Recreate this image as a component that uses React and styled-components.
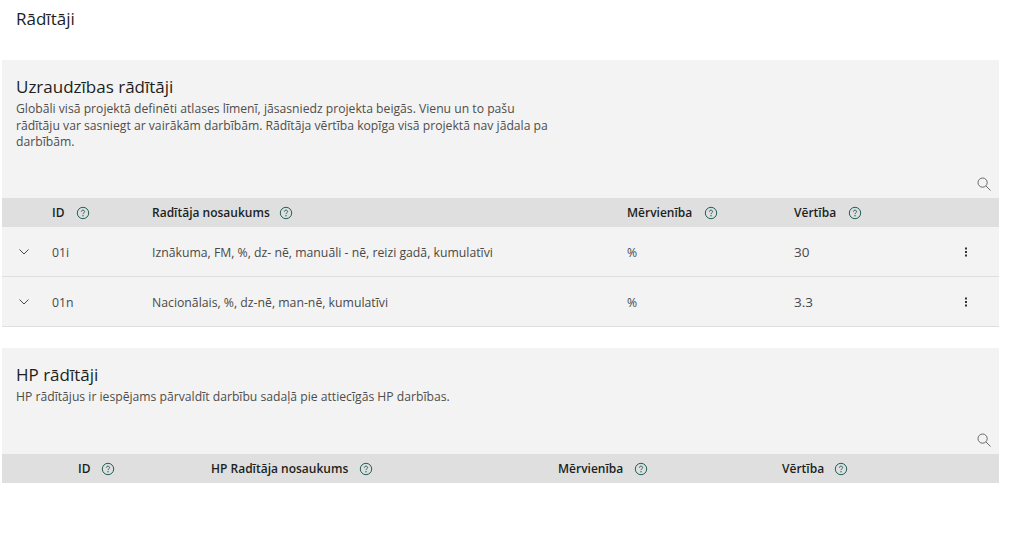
import React from 'react'
import styled, { createGlobalStyle } from 'styled-components'

const Global = createGlobalStyle`
  html, body { margin: 0; padding: 0; background: #fff; }
  body { font-family: "Open Sans", "Noto Sans", sans-serif; color: #252423; }
`

const Page = styled.div`
  width: 1009px;
  height: 551px;
  box-sizing: border-box;
  padding: 0 10px 0 2px;
  overflow: hidden;
`
const PageTitle = styled.h1`
  margin: 0;
  padding: 8px 0 0 14px;
  height: 60px;
  box-sizing: border-box;
  font-size: 17px;
  line-height: 22px;
  font-weight: 400;
  color: #201f1e;
`
const Panel = styled.section`
  background: #f3f3f3;
  margin-bottom: ${p => p.$gap || 0}px;
`
const PanelHead = styled.div`
  height: ${p => p.$height}px;
  box-sizing: border-box;
  padding: 15px 0 0 14px;
  position: relative;
`
const Title = styled.h2`
  margin: 0 0 2px;
  font-size: 17px;
  line-height: 24px;
  font-weight: 400;
  color: #201f1e;
`
const Desc = styled.p`
  margin: 0;
  width: 540px;
  font-size: 12.18px;
  line-height: 16.5px;
  color: #4f4d4b;
`
const SearchBtn = styled.span`
  position: absolute;
  right: 8px;
  bottom: 7px;
  display: flex;
  color: #6b6a69;
`
const HeadRow = styled.div`
  display: grid;
  grid-template-columns: ${p => p.$cols};
  align-items: center;
  height: 29px;
  background: #dfdfdf;
`
const HeadCell = styled.div`
  display: flex;
  align-items: center;
  gap: ${p => p.$gap || 10}px;
  font-size: 12px;
  font-weight: 600;
  color: #201f1e;
`
const Row = styled.div`
  display: grid;
  grid-template-columns: ${p => p.$cols};
  align-items: center;
  height: 50px;
  box-sizing: border-box;
  padding-top: 1px;
  border-bottom: 1px solid #dfdfdf;
  font-size: 12.25px;
  color: #4a4948;
`
const Toggle = styled.span`
  display: flex;
  justify-content: center;
  padding-right: 6px;
  color: #4a4948;
`
const Value = styled.span`
  font-size: 13.5px;
`
const More = styled.span`
  display: flex;
  justify-content: center;
  color: #333;
`

const Help = () => (
  <svg width="14" height="14" viewBox="0 0 14 14" fill="none">
    <circle cx="7" cy="7" r="5.7" stroke="#1f6159" strokeWidth="1" />
    <path d="M5.4 5.7c0-1 .7-1.5 1.6-1.5s1.6.5 1.6 1.4c0 1.2-1.6 1.3-1.6 2.5" stroke="#1f6159" strokeWidth="1" />
    <circle cx="7" cy="9.8" r=".7" fill="#1f6159" />
  </svg>
)
const Search = () => (
  <svg width="14" height="14" viewBox="0 0 14 14" fill="none" stroke="currentColor" strokeWidth="1">
    <circle cx="5.6" cy="5.6" r="4.6" />
    <path d="M9 9l4.5 4.5" />
  </svg>
)
const Chevron = () => (
  <svg width="12" height="12" viewBox="0 0 12 12" fill="none" stroke="currentColor" strokeWidth="1">
    <path d="M1.500 3.500l4.500 4.500L10.500 3.500" />
  </svg>
)
const Dots = () => (
  <svg width="4" height="12" viewBox="0 0 4 12" fill="currentColor">
    <rect x="1" y="1.500" width="2" height="2" />
    <rect x="1" y="5" width="2" height="2" />
    <rect x="1" y="8.500" width="2" height="2" />
  </svg>
)

const mainCols = '50px 100px 475px 167px 152px 40px'
const hpCols = '76px 133px 347px 224px 1fr'

const rows = [
  { id: '01i', name: 'Iznākuma, FM, %, dz- nē, manuāli - nē, reizi gadā, kumulatīvi', unit: '%', value: '30' },
  { id: '01n', name: 'Nacionālais, %, dz-nē, man-nē, kumulatīvi', unit: '%', value: '3.3' },
]

export default function App() {
  return (
    <Page>
      <Global />
      <PageTitle>Rādītāji</PageTitle>
      <Panel $gap={21}>
        <PanelHead $height={138}>
          <Title>Uzraudzības rādītāji</Title>
          <Desc>
            Globāli visā projektā definēti atlases līmenī, jāsasniedz projekta beigās. Vienu un to pašu
            rādītāju var sasniegt ar vairākām darbībām. Rādītāja vērtība kopīga visā projektā nav jādala pa
            darbībām.
          </Desc>
          <SearchBtn><Search /></SearchBtn>
        </PanelHead>
        <HeadRow $cols={mainCols}>
          <span />
          <HeadCell $gap={12}><span>ID</span><Help /></HeadCell>
          <HeadCell $gap={9}><span>Radītāja nosaukums</span><Help /></HeadCell>
          <HeadCell $gap={12}><span>Mērvienība</span><Help /></HeadCell>
          <HeadCell $gap={12}><span>Vērtība</span><Help /></HeadCell>
          <span />
        </HeadRow>
        {rows.map(r => (
          <Row key={r.id} $cols={mainCols}>
            <Toggle><Chevron /></Toggle>
            <span>{r.id}</span>
            <span>{r.name}</span>
            <span>{r.unit}</span>
            <Value>{r.value}</Value>
            <More><Dots /></More>
          </Row>
        ))}
      </Panel>
      <Panel>
        <PanelHead $height={106}>
          <Title>HP rādītāji</Title>
          <Desc>HP rādītājus ir iespējams pārvaldīt darbību sadaļā pie attiecīgās HP darbības.</Desc>
          <SearchBtn><Search /></SearchBtn>
        </PanelHead>
        <HeadRow $cols={hpCols}>
          <span />
          <HeadCell $gap={11}><span>ID</span><Help /></HeadCell>
          <HeadCell $gap={11}><span>HP Radītāja nosaukums</span><Help /></HeadCell>
          <HeadCell $gap={11}><span>Mērvienība</span><Help /></HeadCell>
          <HeadCell><span>Vērtība</span><Help /></HeadCell>
        </HeadRow>
      </Panel>
    </Page>
  )
}
